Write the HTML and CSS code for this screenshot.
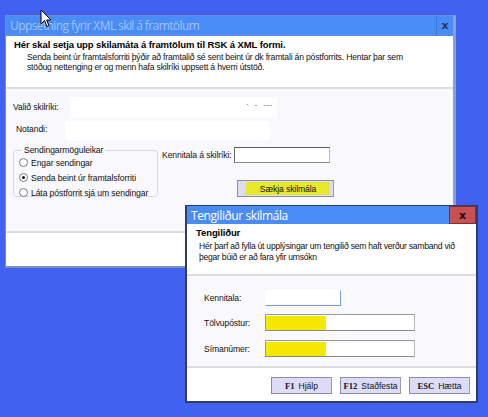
FILE: index.html
```html
<!DOCTYPE html>
<html>
<head>
<meta charset="utf-8">
<link rel="stylesheet" href="styles.css">
</head>
<body>
<div class="desktop">
  <div class="win main">
    <div class="titlebar inactive">
      <span class="title">Uppsetning fyrir XML skil á framtölum</span>
      <span class="close">x</span>
    </div>
    <div class="header">
      <div class="h-bold">Hér skal setja upp skilamáta á framtölum til RSK á XML formi.</div>
      <div class="h-desc">Senda beint úr framtalsforriti þýðir að framtalið sé sent beint úr dk framtali án póstforrits. Hentar þar sem<br>stöðug nettenging er og menn hafa skilríki uppsett á hverri útstöð.</div>
    </div>
    <div class="body">
      <div class="row r-valid">
        <span class="lbl">Valið skilríki:</span>
        <span class="ghost g1"><span class="dots">·&nbsp;&nbsp;-&nbsp;&nbsp;---</span></span>
      </div>
      <div class="row r-user">
        <span class="lbl">Notandi:</span>
        <span class="ghost g2"></span>
      </div>
      <div class="lower">
        <fieldset class="group">
          <legend>Sendingarmöguleikar</legend>
          <div class="radio"><span class="dot"></span>Engar sendingar</div>
          <div class="radio"><span class="dot on"></span>Senda beint úr framtalsforriti</div>
          <div class="radio"><span class="dot"></span>Láta póstforrit sjá um sendingar</div>
        </fieldset>
        <div class="right">
          <div class="krow">
            <span class="lbl">Kennitala á skilríki:</span>
            <span class="input kinput"></span>
          </div>
          <div class="btn fetch"><span class="hl">Sækja skilmála</span></div>
        </div>
      </div>
    </div>
    <div class="footer"></div>
  </div>

  <div class="win second">
    <div class="titlebar">
      <span class="title">Tengiliður skilmála</span>
      <span class="close red">x</span>
    </div>
    <div class="header h2">
      <div class="h-bold">Tengiliður</div>
      <div class="h-desc">Hér þarf að fylla út upplýsingar um tengilið sem haft verður samband við<br>þegar búið er að fara yfir umsókn</div>
    </div>
    <div class="body b2">
      <div class="frow"><span class="flbl">Kennitala:</span><span class="input kt"></span></div>
      <div class="frow"><span class="flbl">Tölvupóstur:</span><span class="input wide"><span class="mark"></span></span></div>
      <div class="frow"><span class="flbl">Símanúmer:</span><span class="input wide"><span class="mark"></span></span></div>
    </div>
    <div class="footer f2">
      <div class="btn fk"><b>F1</b> Hjálp</div>
      <div class="btn fk"><b>F12</b> Staðfesta</div>
      <div class="btn fk"><b>ESC</b> Hætta</div>
    </div>
  </div>

  <svg class="cursor" width="12" height="19" viewBox="0 0 12 19">
    <path d="M1 1 L1 15 L4.5 11.5 L7 17.5 L9 16.6 L6.6 11 L11 11 Z" fill="#fff" stroke="#000" stroke-width="1"/>
  </svg>
</div>
</body>
</html>
```
FILE: styles.css
```css
html, body { margin: 0; padding: 0; }
body { width: 488px; height: 417px; overflow: hidden; background: #4161f1; font-family: "Liberation Sans", Arial, sans-serif; }
.desktop { position: relative; width: 488px; height: 417px; background: #4161f1; }

.win { position: absolute; display: flex; flex-direction: column; box-sizing: border-box; background: #fff; }
.main { left: 5px; top: 15px; width: 451px; height: 253px; border: 1px solid #7f8fb8; border-top-color: #6c8cd8; border-right: 3px solid #8aa0d0; border-bottom: 2px solid #7f8fb8; }
.second { left: 185px; top: 205px; width: 293px; height: 198px; border: 2px solid #2f3d66; border-top: 1px solid #2f3d66; }

.titlebar { height: 20px; flex: none; background: #4a8cf6; display: flex; align-items: center; justify-content: space-between; box-sizing: border-box; }
.main .titlebar { border-bottom: 1px solid #5a8ee0; }
.title { font-family: "Open Sans", "Noto Sans", sans-serif; font-size: 12px; color: #fff; padding-left: 4px; letter-spacing: -0.6px; white-space: nowrap; }
.inactive .title { color: #a2c2fa; }
.close { width: 17px; height: 20px; box-sizing: border-box; border-left: 1px solid #3d74cc; display: flex; align-items: center; justify-content: center; font-family: "DejaVu Sans", sans-serif; font-weight: bold; font-size: 11px; color: #23365c; }
.close.red { width: 27px; height: 18px; background: #c85050; border: 1px solid #7a3030; color: #111; margin-right: 0; }
.second .titlebar { height: 18px; }
.second .title { letter-spacing: -0.4px; }

.header { height: 53px; flex: none; background: #fff; border-bottom: 2px solid #dcdcdc; padding: 3px 0 0 8px; box-sizing: border-box; }
.h-bold { font-weight: bold; font-size: 9.5px; color: #000; letter-spacing: -0.1px; white-space: nowrap; }
.h-desc { font-size: 8.6px; color: #111; line-height: 10px; padding-left: 13px; margin-top: 2px; letter-spacing: -0.18px; white-space: nowrap; }

.body { flex: none; height: 144px; background: #f9f9fd; border-bottom: 2px solid #dcdcdc; box-sizing: border-box; padding: 8px 0 0 7px; font-size: 8.6px; color: #111; }
.footer { flex: 1; background: #fff; }

.row { display: flex; align-items: center; height: 20px; }
.lbl { white-space: nowrap; letter-spacing: -0.1px; }
.ghost { display: block; height: 19px; background: #fff; position: relative; }
.g1 { width: 206px; margin-left: 12px; }
.g2 { width: 205px; margin-left: 18px; margin-top: 2px; }
.r-user .lbl { padding-left: 3px; }
.r-user { margin-top: 2px; }
.dots { position: absolute; right: 4px; top: 2px; font-size: 8px; color: #555; letter-spacing: 0.5px; }

.lower { display: flex; margin-top: 7px; }
.group { margin: 0; padding: 2px 0 2px 5px; width: 145px; height: 51px; box-sizing: border-box; border: 1px solid #d4d8ee; border-radius: 3px; }
.group legend { padding: 0 2px; margin-left: 3px; font-size: 8.6px; letter-spacing: -0.1px; line-height: 8px; }
.radio { display: flex; align-items: center; height: 13px; white-space: nowrap; letter-spacing: -0.1px; }
.radio:nth-child(3) { margin-top: 2px; }
.radio:nth-child(4) { margin-top: 2px; }
.dot { width: 9px; height: 9px; border: 1px solid #7c7c7c; border-radius: 50%; background: #fff; margin-right: 3px; box-sizing: border-box; position: relative; }
.dot.on::after { content: ""; position: absolute; left: 2px; top: 2px; width: 3px; height: 3px; border-radius: 50%; background: #111; }

.right { display: flex; flex-direction: column; margin-left: 4px; }
.krow { display: flex; align-items: center; margin-top: 1px; }
.input { display: block; background: #fff; box-sizing: border-box; border: 1px solid #9a9a9a; border-right-color: #b8b8b8; border-bottom-color: #8a8a8a; position: relative; }
.kinput { width: 96px; height: 16px; margin-left: 2px; border-top-color: #5a5a5a; border-left-color: #6a6a6a; }
.btn { display: flex; align-items: center; justify-content: center; box-sizing: border-box; background: #dcdcf8; border: 1px solid #8c8ca8; border-right-color: #9a9ab2; }
.fetch { width: 97px; height: 17px; margin-left: 75px; margin-top: 17px; padding: 1px 3px 1px 8px; }
.hl { display: flex; align-items: center; justify-content: center; background: #e8e82a; width: 100%; height: 100%; font-size: 8.6px; letter-spacing: -0.1px; }

.h2 { height: 52px; padding: 3px 0 0 9px; }
.h2 .h-desc { padding-left: 3px; margin-top: 3px; line-height: 10.5px; letter-spacing: -0.25px; }
.b2 { height: 92px; padding: 13px 0 0 17px; }
.frow { display: flex; align-items: center; height: 17px; margin-bottom: 8px; }
.frow:nth-child(2) { margin-bottom: 9px; }
.flbl { width: 61px; white-space: nowrap; letter-spacing: -0.1px; }
.kt { width: 76px; height: 16px; border: 1px solid #fff; border-right-color: #7a9ad0; border-bottom-color: #7a9ad0; }
.wide { width: 150px; height: 17px; }
.mark { position: absolute; left: 0; top: 1px; width: 60px; height: 14px; background: #f5e800; }
.f2 { display: flex; justify-content: flex-end; align-items: flex-start; padding: 9px 6px 0 0; gap: 8px; }
.fk { width: 61px; height: 17px; font-size: 8.6px; color: #111; white-space: nowrap; }
.fk b { font-family: "Liberation Serif", serif; font-size: 8.6px; margin-right: 4px; }

.cursor { position: absolute; left: 40px; top: 9px; }
```
